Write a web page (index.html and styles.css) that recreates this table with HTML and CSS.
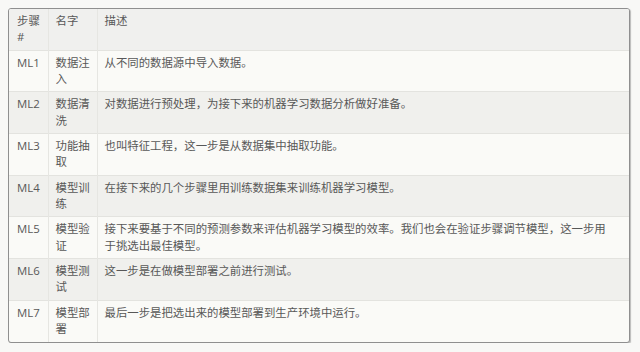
FILE: index.html
```html
<!DOCTYPE html>
<html lang="zh">
<head>
<meta charset="utf-8">
<link rel="stylesheet" href="styles.css">
</head>
<body>
<div class="frame">
<table class="steps">
<colgroup><col class="c1"><col class="c2"><col class="c3"></colgroup>
<thead>
<tr><th>步骤 #</th><th>名字</th><th class="desc">描述</th></tr>
</thead>
<tbody>
<tr><td>ML1</td><td>数据注入</td><td class="desc">从不同的数据源中导入数据。</td></tr>
<tr><td>ML2</td><td>数据清洗</td><td class="desc">对数据进行预处理，为接下来的机器学习数据分析做好准备。</td></tr>
<tr><td>ML3</td><td>功能抽取</td><td class="desc">也叫特征工程，这一步是从数据集中抽取功能。</td></tr>
<tr><td>ML4</td><td>模型训练</td><td class="desc">在接下来的几个步骤里用训练数据集来训练机器学习模型。</td></tr>
<tr><td>ML5</td><td>模型验证</td><td class="desc">接下来要基于不同的预测参数来评估机器学习模型的效率。我们也会在验证步骤调节模型，这一步用于挑选出最佳模型。</td></tr>
<tr><td>ML6</td><td>模型测试</td><td class="desc">这一步是在做模型部署之前进行测试。</td></tr>
<tr><td>ML7</td><td>模型部署</td><td class="desc">最后一步是把选出来的模型部署到生产环境中运行。</td></tr>
</tbody>
</table>
</div>
</body>
</html>
```
FILE: styles.css
```css
html, body {
  margin: 0;
  background: #f8f8f6;
}
body {
  padding: 8px 0 0 8px;
  font-family: "Open Sans", "Noto Sans CJK SC", sans-serif;
  font-size: 11.4px;
  color: #585858;
}
.frame {
  width: 620px;
  border: 1px solid #8f8f8f;
  border-radius: 3px;
  overflow: hidden;
  box-shadow: 1px 1px 1px rgba(0,0,0,0.25);
  background: #fafaf7;
}
.steps {
  width: 100%;
  border-collapse: collapse;
  table-layout: fixed;
}
.c1 { width: 39px; }
.c2 { width: 49px; }
.steps th, .steps td {
  text-align: left;
  vertical-align: top;
  font-weight: normal;
  padding: 4px 6px 4px 7px;
  line-height: 16.35px;
  height: 32.7px;
  border-left: 1px solid #e6e6e2;
  border-top: 1px solid #e3e3df;
}
.steps .desc { padding-right: 16px; }
.steps th:first-child, .steps td:first-child { border-left: none; }
.steps thead th { border-top: none; background: #f0f0ee; }
.steps tbody tr:nth-child(even) td { background: #f0f0ed; }
.steps td:first-child, .steps th:first-child { padding-left: 8px; padding-right: 4px; }
```
